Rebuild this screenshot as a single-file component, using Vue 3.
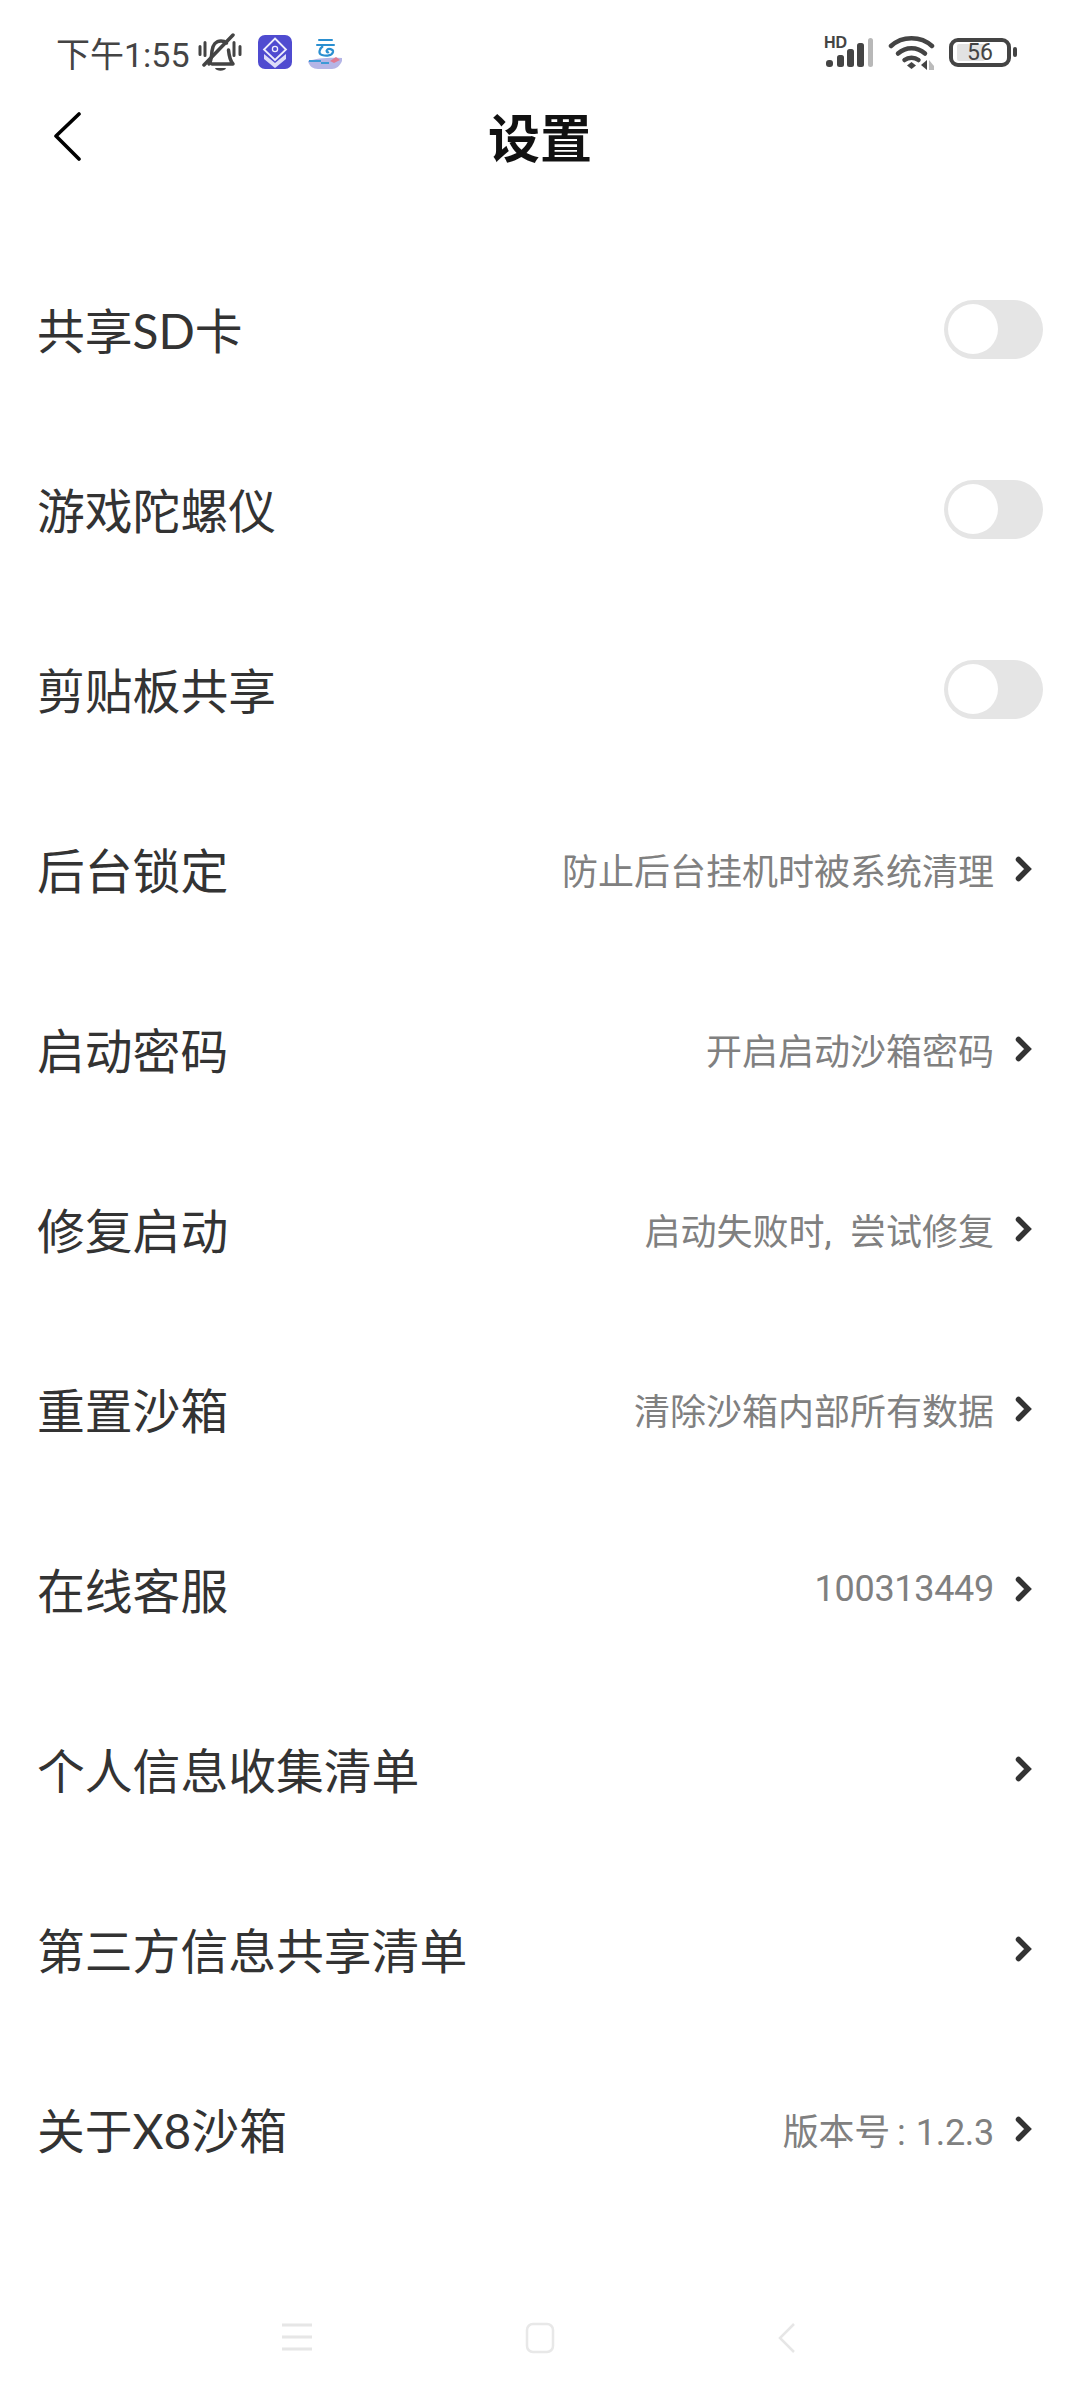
<template>
  <div class="page">
    <header class="status-bar">
      <div class="status-bar__left">
        <span class="status-bar__time">下午1:55</span>
        <svg class="icon-bell" width="44" height="39" viewBox="0 0 44 39" fill="none" stroke="#444" stroke-linecap="round">
          <path d="M2 13.500v8M7 9.500v13M36 9.500v13M42 13.500v8" stroke-width="3" />
          <path d="M11 31c2.500-3 2.500-8 3-13 .6-6 4-10 9-10 2.500 0 4 .6 5.500 2M30.500 17c.5 5 1 10 4.500 14H14" stroke-width="3.500" stroke-linejoin="round" />
          <path d="M6 32 35 2" stroke-width="3.500" />
          <path d="M17 35h11c-1 3.500-10 3.500-11 0Z" fill="#444" stroke="none" />
        </svg>
        <svg width="34" height="34" viewBox="0 0 34 34">
          <rect width="34" height="34" rx="7" fill="#4f4bd0" />
          <path d="M17 3.500 28 14.500 17 25 6 14.500Z" fill="none" stroke="#eeeefc" stroke-width="1.800" />
          <circle cx="17" cy="14" r="2.600" fill="none" stroke="#eeeefc" stroke-width="1.300" />
          <path d="M6 19 17 28 28 19V24L17 33 6 24Z" fill="#dcdcf8" />
        </svg>
        <svg width="34" height="34" viewBox="0 0 34 34">
          <rect width="34" height="34" rx="7" fill="#fff" />
          <path d="M11 5h13M9 10h17" stroke="#2a8fd0" stroke-width="2" stroke-linecap="round" />
          <path d="M15 11c-4 3-5 8-1 9 4 1 10 1 11-3 .6-3-5-4-6-2-1 1 0 3 2 2" fill="none" stroke="#2a8fd0" stroke-width="2.200" />
          <path d="M0 26c8-3 24-4 34-3v3c-2 5-6 8-10 8H10c-5 0-9-3-10-8Z" fill="#b5b5e6" />
          <path d="M1 26h12M13 28h8" stroke="#3d9ad6" stroke-width="2" />
          <path d="M22 26l6-4 4 3-6 3Z" fill="#e07a90" />
        </svg>
      </div>
      <div class="status-bar__right">
        <div class="signal">
          <span class="signal__hd">HD</span>
          <svg width="50" height="33" viewBox="0 0 50 33">
            <rect x="2" y="24" width="7" height="7" rx="3" fill="#444" />
            <rect x="13" y="19" width="7" height="12" rx="2.500" fill="#444" />
            <rect x="23" y="13" width="7" height="18" rx="2.500" fill="#444" />
            <rect x="33" y="7" width="7" height="24" rx="2.500" fill="#444" />
            <rect x="44" y="2" width="5" height="29" rx="2.500" fill="#b8b8b8" />
          </svg>
        </div>
        <svg width="47" height="35" viewBox="0 0 47 35" fill="none" stroke="#444" stroke-width="4.500" stroke-linecap="round">
          <path d="M3 11C14 .5 33 .5 44 11" />
          <path d="M10 18.500c8-7 19-7 27 0" />
          <path d="M16.500 25c4-3 10-3 14 0" />
          <path d="M19 30.500 23.500 27 28 30.500 23.500 34Z" fill="#444" stroke="none" />
          <path d="M39 25v10l-6-5Z" fill="#444" stroke="none" />
          <path d="M41 25v10h5v-4Z" fill="#bbb" stroke="none" />
        </svg>
        <div class="battery">
          <div class="battery__body">
            <div class="battery__fill"></div>
            <span class="battery__num">56</span>
          </div>
          <div class="battery__cap"></div>
        </div>
      </div>
    </header>

    <nav class="title-bar">
      <svg class="title-bar__back" width="30" height="50" viewBox="0 0 30 50" fill="none" stroke="#000" stroke-width="3.600" stroke-linecap="round" stroke-linejoin="round">
        <path d="M26 2 3 24 26 47" />
      </svg>
      <h1 class="title-bar__text">设置</h1>
    </nav>

    <main class="list">
      <div v-for="row in rows" :key="row.label" class="row">
        <span class="row__label">{{ row.label }}</span>
        <div v-if="row.toggle" class="toggle">
          <span class="toggle__knob"></span>
        </div>
        <div v-else class="row__right">
          <span v-if="row.hint" class="row__hint" :class="{ 'row__hint--num': row.numeric }">{{ row.hint }}</span>
          <svg width="20" height="28" viewBox="0 0 20 28" fill="none" stroke="#333" stroke-width="5.500" stroke-linecap="round" stroke-linejoin="miter">
            <path d="M4.500 4.500 14 14 4.500 23.500" />
          </svg>
        </div>
      </div>
    </main>

    <footer class="nav-bar">
      <svg width="30" height="30" viewBox="0 0 30 30" stroke="#e6e6e6" stroke-width="3">
        <path d="M0 3h30M0 15h30M0 27h30" />
      </svg>
      <svg width="30" height="32" viewBox="0 0 30 32" fill="none">
        <rect x="2" y="2" width="26" height="28" rx="6" stroke="#e8e8e8" stroke-width="2.500" />
      </svg>
      <svg class="nav-bar__back" width="20" height="32" viewBox="0 0 20 32" fill="none" stroke="#e6e6e6" stroke-width="2.500">
        <path d="M17 2 3 16 17 30" />
      </svg>
    </footer>
  </div>
</template>

<script setup>
const rows = [
  { label: '共享SD卡', toggle: true },
  { label: '游戏陀螺仪', toggle: true },
  { label: '剪贴板共享', toggle: true },
  { label: '后台锁定', hint: '防止后台挂机时被系统清理' },
  { label: '启动密码', hint: '开启启动沙箱密码' },
  { label: '修复启动', hint: '启动失败时,\u2002尝试修复' },
  { label: '重置沙箱', hint: '清除沙箱内部所有数据' },
  { label: '在线客服', hint: '100313449', numeric: true },
  { label: '个人信息收集清单' },
  { label: '第三方信息共享清单' },
  { label: '关于X8沙箱', hint: '版本号\u2009:\u2009\u200A1.2.3', numeric: true }
]
</script>

<style>
body {
  background: #fff;
}
</style>

<style scoped>
.page {
  width: 1080px;
  height: 2400px;
  display: flex;
  flex-direction: column;
  background: #fff;
  font-family: Lato, "Noto Sans CJK SC", sans-serif;
  overflow: hidden;
}

.status-bar {
  height: 86px;
  padding: 18px 63px 0 56px;
  box-sizing: border-box;
  display: flex;
  align-items: center;
  justify-content: space-between;
}

.status-bar__left {
  display: flex;
  align-items: center;
  gap: 16px;
}

.status-bar__time {
  margin-right: -8px;
  color: #444;
  font-size: 34px;
  font-family: Roboto, "Noto Sans CJK SC", sans-serif;
}

.status-bar__right {
  display: flex;
  align-items: center;
  gap: 14px;
}

.signal {
  position: relative;
  display: flex;
}

.signal__hd {
  position: absolute;
  left: 0;
  top: 0;
  color: #444;
  font-size: 16px;
  font-weight: 700;
  line-height: 14px;
  font-family: "Liberation Sans", sans-serif;
}

.battery {
  display: flex;
  align-items: center;
  gap: 2px;
}

.battery__body {
  position: relative;
  width: 62px;
  height: 29px;
  box-sizing: border-box;
  border: 4px solid #444;
  border-radius: 9px;
  display: flex;
  align-items: center;
  justify-content: center;
}

.battery__fill {
  position: absolute;
  left: 4px;
  top: 2px;
  bottom: 2px;
  width: 28px;
  background: #e2e2e2;
  border-radius: 2px;
}

.battery__num {
  position: relative;
  color: #444;
  font-size: 23px;
  line-height: 1;
  font-family: Roboto, sans-serif;
}

.battery__cap {
  width: 4px;
  height: 10px;
  background: #444;
  border-radius: 2px;
}

.title-bar {
  position: relative;
  height: 56px;
  margin-top: 24px;
  display: flex;
  align-items: center;
  justify-content: center;
}

.title-bar__back {
  position: absolute;
  left: 53px;
  top: 2px;
}

.title-bar__text {
  margin: 0;
  color: #111;
  font-size: 52px;
  font-weight: 700;
  line-height: 56px;
}

.list {
  margin-top: 73px;
  display: flex;
  flex-direction: column;
}

.row {
  height: 180px;
  padding: 0 37px;
  box-sizing: border-box;
  display: flex;
  align-items: center;
  justify-content: space-between;
}

.row__label {
  padding-bottom: 2px;
  color: #333;
  font-size: 47.800px;
}

.row__right {
  margin-right: 9px;
  display: flex;
  align-items: center;
  gap: 20px;
}

.row__hint {
  color: #808080;
  font-size: 36px;
  font-family: Roboto, "Noto Sans CJK SC", sans-serif;
}

.row__hint--num {
  letter-spacing: -0.3px;
}

.toggle {
  width: 99px;
  height: 59px;
  padding: 4px;
  box-sizing: border-box;
  background: #e5e5e5;
  border-radius: 30px;
}

.toggle__knob {
  display: block;
  width: 50px;
  height: 50px;
  background: #fff;
  border-radius: 50%;
}

.nav-bar {
  height: 181px;
  padding: 103px 0 0 282px;
  box-sizing: border-box;
  display: flex;
  align-items: flex-start;
  gap: 213px;
}

.nav-bar__back {
  margin-left: 9px;
}
</style>
